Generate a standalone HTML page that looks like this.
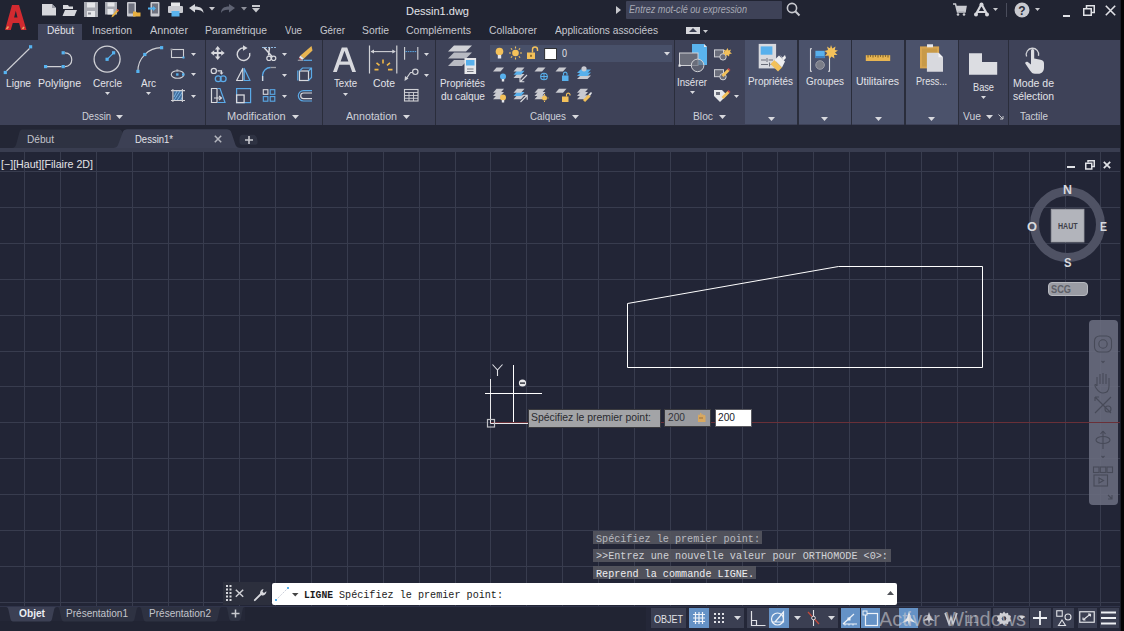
<!DOCTYPE html>
<html><head><meta charset="utf-8">
<style>
*{margin:0;padding:0;box-sizing:border-box}
html,body{width:1124px;height:631px;overflow:hidden;background:#1f2230;font-family:"Liberation Sans",sans-serif;color:#e6e6e6;position:relative}
.a{position:absolute;overflow:visible}
.t{position:absolute;white-space:nowrap}
</style></head><body>
<div class="a" style="left:0px;top:0px;width:1120px;height:40px;background:#212432;"></div>
<div class="a" style="left:0px;top:40px;width:1120px;height:85px;background:#3e4258;"></div>
<div class="a" style="left:0px;top:125px;width:1120px;height:27px;background:#232635;"></div>
<svg class="a" style="left:0px;top:152px;" width="1120" height="454" viewBox="0 0 1120 454"><rect width="1120" height="454" fill="#222536"/><rect x="24" y="0" width="1" height="454" fill="#383c4e"/><rect x="60" y="0" width="1" height="454" fill="#383c4e"/><rect x="96" y="0" width="1" height="454" fill="#383c4e"/><rect x="132" y="0" width="1" height="454" fill="#383c4e"/><rect x="168" y="0" width="1" height="454" fill="#383c4e"/><rect x="203" y="0" width="1" height="454" fill="#383c4e"/><rect x="239" y="0" width="1" height="454" fill="#383c4e"/><rect x="275" y="0" width="1" height="454" fill="#383c4e"/><rect x="311" y="0" width="1" height="454" fill="#383c4e"/><rect x="347" y="0" width="1" height="454" fill="#383c4e"/><rect x="383" y="0" width="1" height="454" fill="#383c4e"/><rect x="419" y="0" width="1" height="454" fill="#383c4e"/><rect x="455" y="0" width="1" height="454" fill="#383c4e"/><rect x="490" y="0" width="1" height="454" fill="#383c4e"/><rect x="526" y="0" width="1" height="454" fill="#383c4e"/><rect x="562" y="0" width="1" height="454" fill="#383c4e"/><rect x="598" y="0" width="1" height="454" fill="#383c4e"/><rect x="634" y="0" width="1" height="454" fill="#383c4e"/><rect x="670" y="0" width="1" height="454" fill="#383c4e"/><rect x="706" y="0" width="1" height="454" fill="#383c4e"/><rect x="742" y="0" width="1" height="454" fill="#383c4e"/><rect x="777" y="0" width="1" height="454" fill="#383c4e"/><rect x="813" y="0" width="1" height="454" fill="#383c4e"/><rect x="849" y="0" width="1" height="454" fill="#383c4e"/><rect x="885" y="0" width="1" height="454" fill="#383c4e"/><rect x="921" y="0" width="1" height="454" fill="#383c4e"/><rect x="957" y="0" width="1" height="454" fill="#383c4e"/><rect x="993" y="0" width="1" height="454" fill="#383c4e"/><rect x="1029" y="0" width="1" height="454" fill="#383c4e"/><rect x="1065" y="0" width="1" height="454" fill="#383c4e"/><rect x="1100" y="0" width="1" height="454" fill="#383c4e"/><rect x="0" y="19" width="1120" height="1" fill="#383c4e"/><rect x="0" y="55" width="1120" height="1" fill="#383c4e"/><rect x="0" y="91" width="1120" height="1" fill="#383c4e"/><rect x="0" y="127" width="1120" height="1" fill="#383c4e"/><rect x="0" y="163" width="1120" height="1" fill="#383c4e"/><rect x="0" y="199" width="1120" height="1" fill="#383c4e"/><rect x="0" y="234" width="1120" height="1" fill="#383c4e"/><rect x="0" y="270" width="1120" height="1" fill="#383c4e"/><rect x="0" y="306" width="1120" height="1" fill="#383c4e"/><rect x="0" y="342" width="1120" height="1" fill="#383c4e"/><rect x="0" y="378" width="1120" height="1" fill="#383c4e"/><rect x="0" y="414" width="1120" height="1" fill="#383c4e"/><rect x="0" y="450" width="1120" height="1" fill="#383c4e"/></svg>
<div class="a" style="left:0px;top:606px;width:1120px;height:25px;background:#212433;"></div>
<div class="a" style="left:1120px;top:0px;width:1px;height:631px;background:#1a1c26;"></div>
<div class="a" style="left:1121px;top:0px;width:3px;height:631px;background:#040405;"></div>
<svg class="a" style="left:3px;top:4px;" width="26" height="28" viewBox="0 0 26 28"><path d="M2 26 L9 1 H16 L23.5 26 H18 L16.1 19 H9.8 L7.8 26 Z M11.1 13.5 H14.5 L12.8 6.8 Z" fill="#d22a30" fill-rule="evenodd"/><path d="M3.5 25 L5.5 22.5 M19.5 25 L21 23" stroke="#f0c070" stroke-width="1.6" opacity="0.8"/></svg>
<svg class="a" style="left:42px;top:4px;" width="15" height="12" viewBox="0 0 15 12"><path d="M0 0H10L14 4V11.5H0Z" fill="#d6d7dc"/><path d="M10 0V4H14" fill="#9a9ca6"/></svg>
<svg class="a" style="left:62px;top:4px;" width="16" height="13" viewBox="0 0 16 13"><path d="M1 1H6L7 2.5H11V5H1Z" fill="#d6d7dc"/><path d="M3 6H15L12.5 12H0.5Z" fill="#d6d7dc"/></svg>
<svg class="a" style="left:84px;top:2px;" width="14" height="15" viewBox="0 0 14 15"><path d="M0 0H14V15H0Z" fill="#a9abb3"/><rect x="3" y="0.5" width="8" height="5" fill="#e6e7ea"/><rect x="3" y="9" width="8" height="6" fill="#e6e7ea"/><rect x="4" y="10.5" width="3" height="2" fill="#8a8c96"/></svg>
<svg class="a" style="left:105px;top:2px;" width="14" height="16" viewBox="0 0 14 16"><path d="M0 0H12V12.5H0Z" fill="#a9abb3"/><rect x="2.5" y="0.5" width="7" height="4" fill="#e6e7ea"/><rect x="2.5" y="7" width="6" height="5.5" fill="#e6e7ea"/><path d="M12.5 7 L14 8.5 L8.5 14.5 L6.5 15.5 L7 13.5 Z" fill="#e8b040"/><path d="M12.5 7 L14 8.5 L13 9.5 L11.5 8Z" fill="#d04040"/></svg>
<svg class="a" style="left:127px;top:2px;" width="14" height="15" viewBox="0 0 14 15"><rect x="0" y="0" width="9" height="14.5" rx="1" fill="#c9cad0"/><rect x="1.5" y="1.5" width="6" height="10" fill="#707380"/><path d="M6 9.5H9L10 10.5H13.5V14.5H6Z" fill="#e8b040"/></svg>
<svg class="a" style="left:148px;top:2px;" width="13" height="15" viewBox="0 0 13 15"><rect x="2.5" y="0" width="9" height="14.5" rx="1" fill="#c9cad0"/><rect x="4" y="1.5" width="6" height="10" fill="#707380"/><path d="M0 5.5H5V4L8 6.5 5 9V7.5H0Z" fill="#4fb0ee"/></svg>
<svg class="a" style="left:168px;top:2px;" width="15" height="15" viewBox="0 0 15 15"><rect x="3" y="0.5" width="9" height="4" fill="#e6e7ea"/><rect x="0" y="4" width="15" height="7" rx="1" fill="#c9cad0"/><rect x="3.5" y="9" width="8" height="5.5" fill="#5ab4ee"/></svg>
<svg class="a" style="left:189px;top:4px;" width="15" height="10" viewBox="0 0 15 10"><path d="M0 4 L6 0 V2.5 C11 2.5 14.5 4.5 14.5 9 C13 6.5 10 5.5 6 5.8 V8.5 Z" fill="#d6d7dc"/></svg>
<svg class="a" style="left:208.5px;top:7.25px;" width="6" height="3.5" viewBox="0 0 6 3.5"><path d="M0 0H6 L3.0 3.5 Z" fill="#c8c9ce"/></svg>
<svg class="a" style="left:221px;top:4px;" width="14" height="10" viewBox="0 0 14 10"><path d="M14 4 L8 0 V2.5 C3 2.5 0 4.5 0 9 C1.5 6.5 4 5.5 8 5.8 V8.5 Z" fill="#5e6272"/></svg>
<svg class="a" style="left:240.5px;top:7.25px;" width="6" height="3.5" viewBox="0 0 6 3.5"><path d="M0 0H6 L3.0 3.5 Z" fill="#8e909a"/></svg>
<div class="a" style="left:252px;top:5px;width:8px;height:1.5px;background:#c8c9ce;"></div>
<svg class="a" style="left:252.0px;top:7.75px;" width="8" height="4.5" viewBox="0 0 8 4.5"><path d="M0 0H8 L4.0 4.5 Z" fill="#c8c9ce"/></svg>
<div class="t" style="left:406.00px;top:6px;font-size:11px;line-height:11px;color:#e4e5ea;font-family:'Liberation Sans',sans-serif;">Dessin1.dwg</div>
<svg class="a" style="left:616px;top:6px;" width="5" height="8" viewBox="0 0 5 8"><path d="M0 0L5 4L0 8Z" fill="#c8c9ce"/></svg>
<div class="a" style="left:626px;top:1px;width:156px;height:18px;background:#3e4257;border-radius:1px"></div>
<div class="t" style="left:629.00px;top:5px;font-size:10px;line-height:10px;color:#a7a9b4;font-family:'Liberation Sans',sans-serif;font-style:italic;transform:scaleX(0.9112);transform-origin:0.00px 0;">Entrez mot-clé ou expression</div>
<svg class="a" style="left:786px;top:2px;" width="15" height="15" viewBox="0 0 15 15"><circle cx="6" cy="6" r="4.6" fill="none" stroke="#c9cad0" stroke-width="1.6"/><path d="M9.3 9.3 L13.5 13.5" stroke="#c9cad0" stroke-width="2"/></svg>
<svg class="a" style="left:953px;top:3px;" width="14" height="13" viewBox="0 0 14 13"><path d="M0 1H2.5L4.5 9H12L13 3.5H3.5" fill="none" stroke="#c9cad0" stroke-width="1.5"/><rect x="4" y="3.5" width="8.5" height="5" fill="#c9cad0"/><circle cx="5" cy="11.5" r="1.3" fill="#c9cad0"/><circle cx="11" cy="11.5" r="1.3" fill="#c9cad0"/></svg>
<svg class="a" style="left:974px;top:2px;" width="15" height="15" viewBox="0 0 15 15"><path d="M7.5 2 L1.5 13 M7.5 2 L13.5 13 M3.5 10 H11.5" stroke="#d6d7dc" stroke-width="2.2" fill="none"/><circle cx="7.5" cy="2.5" r="2" fill="#d6d7dc"/><circle cx="2" cy="12.5" r="2" fill="#d6d7dc"/><circle cx="13" cy="12.5" r="2" fill="#d6d7dc"/></svg>
<svg class="a" style="left:992.5px;top:8.0px;" width="5" height="3.0" viewBox="0 0 5 3.0"><path d="M0 0H5 L2.5 3.0 Z" fill="#c8c9ce"/></svg>
<div class="a" style="left:1006px;top:3px;width:1px;height:14px;background:#4a4d5c;"></div>
<svg class="a" style="left:1014px;top:2px;" width="16" height="16" viewBox="0 0 16 16"><circle cx="8" cy="8" r="7.5" fill="#c9cad0"/><text x="8" y="12.5" font-family="Liberation Sans" font-weight="bold" font-size="12" text-anchor="middle" fill="#2a2d3a">?</text></svg>
<svg class="a" style="left:1034.5px;top:8.0px;" width="5" height="3.0" viewBox="0 0 5 3.0"><path d="M0 0H5 L2.5 3.0 Z" fill="#c8c9ce"/></svg>
<div class="a" style="left:1063px;top:15px;width:7px;height:2px;background:#e0e1e6;"></div>
<svg class="a" style="left:1083px;top:5px;" width="12" height="11" viewBox="0 0 12 11"><path d="M3.5 3V0.75H11.25V7.5H8.5" fill="none" stroke="#e0e1e6" stroke-width="1.5"/><rect x="0.75" y="3.75" width="7.5" height="6.5" fill="none" stroke="#e0e1e6" stroke-width="1.5"/></svg>
<svg class="a" style="left:1105px;top:5px;" width="11" height="11" viewBox="0 0 11 11"><path d="M0.8 0.8L10.2 10.2M10.2 0.8L0.8 10.2" stroke="#e0e1e6" stroke-width="1.6"/></svg>
<div class="a" style="left:38px;top:24px;width:44px;height:16px;background:#3e4258;"></div>
<div class="t" style="left:47.00px;top:25px;font-size:11px;line-height:11px;color:#e2e3e8;font-family:'Liberation Sans',sans-serif;transform:scaleX(0.9184);transform-origin:0.00px 0;">Début</div>
<div class="t" style="left:92.00px;top:25px;font-size:11px;line-height:11px;color:#c5c7ce;font-family:'Liberation Sans',sans-serif;transform:scaleX(0.9479);transform-origin:0.00px 0;">Insertion</div>
<div class="t" style="left:150.00px;top:25px;font-size:11px;line-height:11px;color:#c5c7ce;font-family:'Liberation Sans',sans-serif;transform:scaleX(0.9870);transform-origin:0.00px 0;">Annoter</div>
<div class="t" style="left:205.00px;top:25px;font-size:11px;line-height:11px;color:#c5c7ce;font-family:'Liberation Sans',sans-serif;transform:scaleX(0.9394);transform-origin:0.00px 0;">Paramétrique</div>
<div class="t" style="left:285.00px;top:25px;font-size:11px;line-height:11px;color:#c5c7ce;font-family:'Liberation Sans',sans-serif;transform:scaleX(0.8854);transform-origin:0.00px 0;">Vue</div>
<div class="t" style="left:320.00px;top:25px;font-size:11px;line-height:11px;color:#c5c7ce;font-family:'Liberation Sans',sans-serif;transform:scaleX(0.8897);transform-origin:0.00px 0;">Gérer</div>
<div class="t" style="left:362.00px;top:25px;font-size:11px;line-height:11px;color:#c5c7ce;font-family:'Liberation Sans',sans-serif;transform:scaleX(0.9408);transform-origin:0.00px 0;">Sortie</div>
<div class="t" style="left:406.00px;top:25px;font-size:11px;line-height:11px;color:#c5c7ce;font-family:'Liberation Sans',sans-serif;transform:scaleX(0.9573);transform-origin:0.00px 0;">Compléments</div>
<div class="t" style="left:489.00px;top:25px;font-size:11px;line-height:11px;color:#c5c7ce;font-family:'Liberation Sans',sans-serif;transform:scaleX(0.9467);transform-origin:0.00px 0;">Collaborer</div>
<div class="t" style="left:555.00px;top:25px;font-size:11px;line-height:11px;color:#c5c7ce;font-family:'Liberation Sans',sans-serif;transform:scaleX(0.9254);transform-origin:0.00px 0;">Applications associées</div>
<div class="a" style="left:686px;top:27px;width:14px;height:7px;background:#d6d7dc;"></div>
<svg class="a" style="left:689px;top:28px;" width="8" height="4" viewBox="0 0 8 4"><path d="M0 4L4 0L8 4Z" fill="#3b3f52"/></svg>
<svg class="a" style="left:702.5px;top:29.5px;" width="5" height="3.0" viewBox="0 0 5 3.0"><path d="M0 0H5 L2.5 3.0 Z" fill="#c8c9ce"/></svg>
<div class="a" style="left:204.5px;top:40px;width:1.5px;height:85px;background:#2a2d3b;"></div>
<div class="a" style="left:321.5px;top:40px;width:1.5px;height:85px;background:#2a2d3b;"></div>
<div class="a" style="left:434.5px;top:40px;width:1.5px;height:85px;background:#2a2d3b;"></div>
<div class="a" style="left:673.5px;top:40px;width:1.5px;height:85px;background:#2a2d3b;"></div>
<div class="a" style="left:745px;top:40px;width:52px;height:84px;background:#4b526b;"></div>
<div class="a" style="left:799px;top:40px;width:52px;height:84px;background:#4b526b;"></div>
<div class="a" style="left:852px;top:40px;width:52px;height:84px;background:#4b526b;"></div>
<div class="a" style="left:906px;top:40px;width:52px;height:84px;background:#4b526b;"></div>
<div class="a" style="left:797px;top:40px;width:2px;height:85px;background:#2a2d3b;"></div>
<div class="a" style="left:851px;top:40px;width:1px;height:85px;background:#2a2d3b;"></div>
<div class="a" style="left:904px;top:40px;width:2px;height:85px;background:#2a2d3b;"></div>
<div class="a" style="left:958px;top:40px;width:1px;height:85px;background:#2a2d3b;"></div>
<div class="a" style="left:1008px;top:40px;width:1px;height:85px;background:#2a2d3b;"></div>
<div class="t" style="left:6.00px;top:78px;font-size:11px;line-height:11px;color:#e2e3e8;font-family:'Liberation Sans',sans-serif;transform:scaleX(0.9294);transform-origin:0.00px 0;">Ligne</div>
<div class="t" style="left:38.00px;top:78px;font-size:11px;line-height:11px;color:#e2e3e8;font-family:'Liberation Sans',sans-serif;transform:scaleX(0.9641);transform-origin:0.00px 0;">Polyligne</div>
<div class="t" style="left:93.00px;top:78px;font-size:11px;line-height:11px;color:#e2e3e8;font-family:'Liberation Sans',sans-serif;transform:scaleX(0.9119);transform-origin:0.00px 0;">Cercle</div>
<div class="t" style="left:141.00px;top:78px;font-size:11px;line-height:11px;color:#e2e3e8;font-family:'Liberation Sans',sans-serif;transform:scaleX(0.9091);transform-origin:0.00px 0;">Arc</div>
<svg class="a" style="left:105.0px;top:92.0px;" width="5" height="3.0" viewBox="0 0 5 3.0"><path d="M0 0H5 L2.5 3.0 Z" fill="#d8d9de"/></svg>
<svg class="a" style="left:146.0px;top:92.0px;" width="5" height="3.0" viewBox="0 0 5 3.0"><path d="M0 0H5 L2.5 3.0 Z" fill="#d8d9de"/></svg>
<div class="t" style="left:82.00px;top:111px;font-size:11px;line-height:11px;color:#cfd1d8;font-family:'Liberation Sans',sans-serif;transform:scaleX(0.8631);transform-origin:0.00px 0;">Dessin</div>
<svg class="a" style="left:116.2px;top:114.7px;" width="7" height="4.0" viewBox="0 0 7 4.0"><path d="M0 0H7 L3.5 4.0 Z" fill="#d8d9de"/></svg>
<div class="t" style="left:227.00px;top:111px;font-size:11px;line-height:11px;color:#cfd1d8;font-family:'Liberation Sans',sans-serif;">Modification</div>
<svg class="a" style="left:292.0px;top:114.7px;" width="7" height="4.0" viewBox="0 0 7 4.0"><path d="M0 0H7 L3.5 4.0 Z" fill="#d8d9de"/></svg>
<div class="t" style="left:334.00px;top:78px;font-size:11px;line-height:11px;color:#e2e3e8;font-family:'Liberation Sans',sans-serif;transform:scaleX(0.8745);transform-origin:0.00px 0;">Texte</div>
<svg class="a" style="left:342.5px;top:92.5px;" width="5" height="3.0" viewBox="0 0 5 3.0"><path d="M0 0H5 L2.5 3.0 Z" fill="#d8d9de"/></svg>
<div class="t" style="left:373.00px;top:78px;font-size:11px;line-height:11px;color:#e2e3e8;font-family:'Liberation Sans',sans-serif;transform:scaleX(0.9483);transform-origin:0.00px 0;">Cote</div>
<div class="t" style="left:346.00px;top:111px;font-size:11px;line-height:11px;color:#cfd1d8;font-family:'Liberation Sans',sans-serif;transform:scaleX(0.9696);transform-origin:0.00px 0;">Annotation</div>
<svg class="a" style="left:403.3px;top:114.7px;" width="7" height="4.0" viewBox="0 0 7 4.0"><path d="M0 0H7 L3.5 4.0 Z" fill="#d8d9de"/></svg>
<div class="t" style="left:440.00px;top:78px;font-size:11px;line-height:11px;color:#e2e3e8;font-family:'Liberation Sans',sans-serif;transform:scaleX(0.8982);transform-origin:0.00px 0;">Propriétés</div>
<div class="t" style="left:441.00px;top:91px;font-size:11px;line-height:11px;color:#e2e3e8;font-family:'Liberation Sans',sans-serif;transform:scaleX(0.9224);transform-origin:0.00px 0;">du calque</div>
<div class="t" style="left:530.00px;top:111px;font-size:11px;line-height:11px;color:#cfd1d8;font-family:'Liberation Sans',sans-serif;transform:scaleX(0.8911);transform-origin:0.00px 0;">Calques</div>
<svg class="a" style="left:571.8px;top:114.7px;" width="7" height="4.0" viewBox="0 0 7 4.0"><path d="M0 0H7 L3.5 4.0 Z" fill="#d8d9de"/></svg>
<div class="t" style="left:677.00px;top:77px;font-size:11px;line-height:11px;color:#e2e3e8;font-family:'Liberation Sans',sans-serif;transform:scaleX(0.8772);transform-origin:0.00px 0;">Insérer</div>
<svg class="a" style="left:689.5px;top:91.0px;" width="5" height="3.0" viewBox="0 0 5 3.0"><path d="M0 0H5 L2.5 3.0 Z" fill="#d8d9de"/></svg>
<div class="t" style="left:693.00px;top:111px;font-size:11px;line-height:11px;color:#cfd1d8;font-family:'Liberation Sans',sans-serif;transform:scaleX(0.9346);transform-origin:0.00px 0;">Bloc</div>
<svg class="a" style="left:718.5px;top:114.7px;" width="7" height="4.0" viewBox="0 0 7 4.0"><path d="M0 0H7 L3.5 4.0 Z" fill="#d8d9de"/></svg>
<div class="t" style="left:748.00px;top:76px;font-size:11px;line-height:11px;color:#e2e3e8;font-family:'Liberation Sans',sans-serif;transform:scaleX(0.8982);transform-origin:0.00px 0;">Propriétés</div>
<svg class="a" style="left:767.5px;top:116.5px;" width="7" height="4.0" viewBox="0 0 7 4.0"><path d="M0 0H7 L3.5 4.0 Z" fill="#d8d9de"/></svg>
<div class="t" style="left:806.00px;top:76px;font-size:11px;line-height:11px;color:#e2e3e8;font-family:'Liberation Sans',sans-serif;transform:scaleX(0.9005);transform-origin:0.00px 0;">Groupes</div>
<svg class="a" style="left:821.0px;top:116.5px;" width="7" height="4.0" viewBox="0 0 7 4.0"><path d="M0 0H7 L3.5 4.0 Z" fill="#d8d9de"/></svg>
<div class="t" style="left:856.00px;top:76px;font-size:11px;line-height:11px;color:#e2e3e8;font-family:'Liberation Sans',sans-serif;transform:scaleX(0.9513);transform-origin:0.00px 0;">Utilitaires</div>
<svg class="a" style="left:874.5px;top:116.5px;" width="7" height="4.0" viewBox="0 0 7 4.0"><path d="M0 0H7 L3.5 4.0 Z" fill="#d8d9de"/></svg>
<div class="t" style="left:916.00px;top:76px;font-size:11px;line-height:11px;color:#e2e3e8;font-family:'Liberation Sans',sans-serif;transform:scaleX(0.8311);transform-origin:0.00px 0;">Press...</div>
<svg class="a" style="left:927.9px;top:116.5px;" width="7" height="4.0" viewBox="0 0 7 4.0"><path d="M0 0H7 L3.5 4.0 Z" fill="#d8d9de"/></svg>
<div class="t" style="left:973.00px;top:82px;font-size:11px;line-height:11px;color:#e2e3e8;font-family:'Liberation Sans',sans-serif;transform:scaleX(0.8367);transform-origin:0.00px 0;">Base</div>
<svg class="a" style="left:981.2px;top:96.0px;" width="5" height="3.0" viewBox="0 0 5 3.0"><path d="M0 0H5 L2.5 3.0 Z" fill="#d8d9de"/></svg>
<div class="t" style="left:963.00px;top:111px;font-size:11px;line-height:11px;color:#cfd1d8;font-family:'Liberation Sans',sans-serif;transform:scaleX(0.9375);transform-origin:0.00px 0;">Vue</div>
<svg class="a" style="left:986.0px;top:114.7px;" width="7" height="4.0" viewBox="0 0 7 4.0"><path d="M0 0H7 L3.5 4.0 Z" fill="#d8d9de"/></svg>
<svg class="a" style="left:998px;top:114px;" width="6" height="6" viewBox="0 0 6 6"><path d="M0.5 0.5L5 5M5 2V5H2" stroke="#c8c9ce" stroke-width="1" fill="none"/></svg>
<div class="t" style="left:1013.00px;top:78px;font-size:11px;line-height:11px;color:#e2e3e8;font-family:'Liberation Sans',sans-serif;transform:scaleX(0.9579);transform-origin:0.00px 0;">Mode de</div>
<div class="t" style="left:1013.00px;top:91px;font-size:11px;line-height:11px;color:#e2e3e8;font-family:'Liberation Sans',sans-serif;transform:scaleX(0.9447);transform-origin:0.00px 0;">sélection</div>
<div class="t" style="left:1020.00px;top:111px;font-size:11px;line-height:11px;color:#cfd1d8;font-family:'Liberation Sans',sans-serif;transform:scaleX(0.8974);transform-origin:0.00px 0;">Tactile</div>
<svg class="a" style="left:0px;top:0px;" width="210" height="125" viewBox="0 0 210 125"><path d="M6.5 71 L29.5 48.5" stroke="#cfd0d5" stroke-width="1.1"/><rect x="29.00" y="45.20" width="3.20" height="3.20" fill="#56b3f0"/><rect x="3.70" y="70.90" width="3.20" height="3.20" fill="#56b3f0"/><path d="M47 66.6 H61.5 M65 52.8 C74 52.8 74 66.6 65 66.6" stroke="#cfd0d5" stroke-width="1.2" fill="none"/><rect x="44.00" y="65.00" width="3.20" height="3.20" fill="#56b3f0"/><rect x="61.60" y="65.00" width="3.20" height="3.20" fill="#56b3f0"/><rect x="61.60" y="51.20" width="3.20" height="3.20" fill="#56b3f0"/><circle cx="107.1" cy="59.1" r="13" stroke="#cfd0d5" stroke-width="1.3" fill="none"/><path d="M107.1 59.3 L113.6 52.8" stroke="#56b3f0" stroke-width="1.2"/><rect x="105.50" y="57.70" width="3.20" height="3.20" fill="#56b3f0"/><rect x="112.00" y="51.20" width="3.20" height="3.20" fill="#56b3f0"/><path d="M137.9 71.4 A23.4 23.4 0 0 1 161.6 47.7" stroke="#cfd0d5" stroke-width="1.2" fill="none"/><rect x="136.30" y="69.80" width="3.20" height="3.20" fill="#56b3f0"/><rect x="143.20" y="52.90" width="3.20" height="3.20" fill="#56b3f0"/><rect x="160.00" y="46.10" width="3.20" height="3.20" fill="#56b3f0"/><rect x="171.5" y="49.5" width="12" height="8" stroke="#cfd0d5" stroke-width="1.1" fill="none"/><rect x="170.50" y="48.50" width="2.00" height="2.00" fill="#8a8c96"/><rect x="182.50" y="56.50" width="2.00" height="2.00" fill="#56b3f0"/><ellipse cx="177.6" cy="74.5" rx="6.3" ry="3.8" stroke="#cfd0d5" stroke-width="1.1" fill="none"/><rect x="176.10" y="73.30" width="2.40" height="2.40" fill="#56b3f0"/><rect x="182.00" y="73.30" width="2.40" height="2.40" fill="#56b3f0"/><rect x="176.30" y="69.50" width="2.00" height="2.00" fill="#b8bac2"/><rect x="173.5" y="91" width="9" height="9.5" fill="#3f6c9c"/><path d="M174 97 L177 91 M174 100.5 L180 91 M177 100.5 L182.5 92 M180.5 100.5 L182.5 97" stroke="#8cc4f0" stroke-width="0.8"/><path d="M172.9 89 V102 M182.4 89 V102 M171 90.6 H185 M171 100.5 H185" stroke="#cfd0d5" stroke-width="1.1"/></svg>
<svg class="a" style="left:191.3px;top:52.5px;" width="5" height="3.0" viewBox="0 0 5 3.0"><path d="M0 0H5 L2.5 3.0 Z" fill="#d8d9de"/></svg>
<svg class="a" style="left:191.3px;top:73.3px;" width="5" height="3.0" viewBox="0 0 5 3.0"><path d="M0 0H5 L2.5 3.0 Z" fill="#d8d9de"/></svg>
<svg class="a" style="left:191.3px;top:94.7px;" width="5" height="3.0" viewBox="0 0 5 3.0"><path d="M0 0H5 L2.5 3.0 Z" fill="#d8d9de"/></svg>
<svg class="a" style="left:0px;top:0px;" width="330" height="125" viewBox="0 0 330 125"><path d="M217.7 46 L220.5 49.5 H218.6 V52.1 H221.2 V50.2 L224.7 53 L221.2 55.8 V53.9 H218.6 V56.5 H220.5 L217.7 60 L214.9 56.5 H216.8 V53.9 H214.2 V55.8 L210.7 53 L214.2 50.2 V52.1 H216.8 V49.5 H214.9 Z" fill="#d8d9de"/><path d="M243.5 47.9 A6.3 6.3 0 1 0 249.7 53" stroke="#d8d9de" stroke-width="1.4" fill="none"/><path d="M243 45.3 L247.6 48 L243 50.7 Z" fill="#d8d9de"/><path d="M262 47.5 H276" stroke="#8fb8e0" stroke-width="1" stroke-dasharray="2 1"/><path d="M264 47.5 L272.5 57 M269.5 47.5 L268.5 55.5" stroke="#d8d9de" stroke-width="1.5"/><circle cx="269" cy="58.3" r="2.2" stroke="#d8d9de" stroke-width="1.2" fill="none"/><circle cx="273.6" cy="58.3" r="2.2" stroke="#d8d9de" stroke-width="1.2" fill="none"/><path d="M311.5 46 L312.5 50.5 L304 58.5 L300.5 55.5 Z" fill="#e8b552"/><path d="M300.5 55.5 L304 58.5 L302 60 L299 57.5Z" fill="#e6e7ea"/><path d="M299 57.5 L302 60 L300 60.5Z" fill="#d04848"/><path d="M297.8 60.3 H303" stroke="#9ea0a8" stroke-width="1.2"/><path d="M303.5 60.3 H312" stroke="#5aaae8" stroke-width="1.2"/><circle cx="213.8" cy="70.9" r="2.6" stroke="#d8d9de" stroke-width="1.2" fill="none"/><path d="M217.5 70.9 H221.5 V73" stroke="#d8d9de" stroke-width="1.2" fill="none"/><path d="M219.5 72.5 H223.5 L221.5 74.8Z" fill="#d8d9de"/><circle cx="218.2" cy="78.8" r="2.9" stroke="#5aaae8" stroke-width="1.3" fill="none"/><circle cx="223.2" cy="78.8" r="2.9" stroke="#5aaae8" stroke-width="1.3" fill="none"/><path d="M242.8 68.5 V80.5 H236.6 Z" stroke="#d8d9de" stroke-width="1.2" fill="none" stroke-linejoin="round"/><path d="M244.2 68.5 V80.5 H250 Z" stroke="#5aaae8" stroke-width="1.2" fill="none" stroke-linejoin="round"/><path d="M262.6 81 V75 A8 8 0 0 1 270.5 67.5" stroke="#5aaae8" stroke-width="1.3" fill="none"/><path d="M270.5 67.5 H276" stroke="#9ea0a8" stroke-width="1.3"/><path d="M262.6 81 V76" stroke="#d8d9de" stroke-width="1.3"/><rect x="299.5" y="71" width="9" height="9.5" stroke="#d8d9de" stroke-width="1.2" fill="none"/><path d="M299.5 71 L302.5 68 H311.5 V77.5 L308.5 80.5 M308.5 71 L311.5 68" stroke="#5aaae8" stroke-width="1.2" fill="none"/><path d="M297.8 70.5 V80.5" stroke="#5aaae8" stroke-width="1.2"/><path d="M211.5 88.5 H217 V102.5 H211.5 Z" stroke="#d8d9de" stroke-width="1.2" fill="none"/><path d="M217.5 88.5 H220 L225 102.5 H217.5" stroke="#5aaae8" stroke-width="1.2" fill="none"/><path d="M214 98 H221 M219 96 L221.5 98 L219 100" stroke="#d8d9de" stroke-width="1.2" fill="none"/><rect x="236.6" y="88.6" width="14" height="14" stroke="#5aaae8" stroke-width="1.2" fill="none"/><rect x="236.6" y="95" width="7.5" height="7.6" stroke="#d8d9de" stroke-width="1.3" fill="none"/><rect x="263.3" y="89.7" width="4.6" height="4.6" stroke="#d8d9de" stroke-width="1.1" fill="none"/><rect x="270.2" y="89.7" width="4.6" height="4.6" stroke="#5aaae8" stroke-width="1.1" fill="none"/><rect x="263.3" y="96.6" width="4.6" height="4.6" stroke="#5aaae8" stroke-width="1.1" fill="none"/><rect x="270.2" y="96.6" width="4.6" height="4.6" stroke="#5aaae8" stroke-width="1.1" fill="none"/><path d="M312 90.6 H303.5 A5.2 5.2 0 0 0 303.5 101 H312" stroke="#5aaae8" stroke-width="1.2" fill="none"/><path d="M312 93 H303.5 A2.8 2.8 0 0 0 303.5 98.6 H312" stroke="#d8d9de" stroke-width="1.2" fill="none"/></svg>
<svg class="a" style="left:282.3px;top:52.5px;" width="5" height="3.0" viewBox="0 0 5 3.0"><path d="M0 0H5 L2.5 3.0 Z" fill="#d8d9de"/></svg>
<svg class="a" style="left:282.3px;top:73.5px;" width="5" height="3.0" viewBox="0 0 5 3.0"><path d="M0 0H5 L2.5 3.0 Z" fill="#d8d9de"/></svg>
<svg class="a" style="left:282.3px;top:94.8px;" width="5" height="3.0" viewBox="0 0 5 3.0"><path d="M0 0H5 L2.5 3.0 Z" fill="#d8d9de"/></svg>
<svg class="a" style="left:0px;top:0px;" width="360" height="80" viewBox="0 0 360 80"><path d="M333 72 L341.8 47.6 H347.2 L356 72 H352.2 L349.6 64.8 H339.4 L336.8 72 Z M340.6 61.5 H348.4 L344.5 50.8 Z" fill="#d8d9de" fill-rule="evenodd"/></svg>
<svg class="a" style="left:0px;top:0px;" width="440" height="125" viewBox="0 0 440 125"><path d="M369.5 45.5 V73.5 M396.8 45.5 V73.5" stroke="#d0d1d6" stroke-width="1.2"/><path d="M371 51.6 H395" stroke="#d0d1d6" stroke-width="1.1"/><path d="M370.5 51.6 L374 49.6 V53.6Z M395.8 51.6 L392.3 49.6 V53.6Z" fill="#d0d1d6"/><path d="M374.5 69.6 H378.5 M388 69.6 H392.5 M376.5 62.8 L379.5 65.3 M390 62.8 L387 65.3 M383 59.5 V63.5" stroke="#f0b848" stroke-width="1.6"/><path d="M404.6 47 V59.7 M417.8 47 V59.7" stroke="#d0d1d6" stroke-width="1.1"/><path d="M405.5 51.6 H417" stroke="#5aaae8" stroke-width="1" stroke-dasharray="1.5 0.8"/><circle cx="415.3" cy="71.8" r="2.7" stroke="#d0d1d6" stroke-width="1.2" fill="none"/><path d="M412.8 72.5 H410.5 L406 79" stroke="#d0d1d6" stroke-width="1.2" fill="none"/><path d="M404.5 81 L405 76 L408.5 78.5Z" fill="#d0d1d6"/><rect x="404.5" y="89.5" width="13.5" height="11.5" stroke="#d0d1d6" stroke-width="1.1" fill="none"/><path d="M404.5 92.5 H418 M404.5 95.5 H418 M404.5 98.3 H418 M409 92.5 V101 M413.5 92.5 V101" stroke="#d0d1d6" stroke-width="0.9"/></svg>
<svg class="a" style="left:424.1px;top:52.5px;" width="5" height="3.0" viewBox="0 0 5 3.0"><path d="M0 0H5 L2.5 3.0 Z" fill="#d8d9de"/></svg>
<svg class="a" style="left:424.1px;top:73.5px;" width="5" height="3.0" viewBox="0 0 5 3.0"><path d="M0 0H5 L2.5 3.0 Z" fill="#d8d9de"/></svg>
<svg class="a" style="left:0px;top:0px;" width="480" height="125" viewBox="0 0 480 125"><path d="M454.00 45.60 H472.00 L466.00 51.60 H448.00 Z" fill="#d0d1d6"/><path d="M454.00 52.60 H472.00 L466.00 58.60 H448.00 Z" fill="#b8bac2"/><path d="M454.00 60.00 H468.00 L462.00 66.00 H448.00 Z" fill="#b8bac2"/><rect x="464.5" y="58" width="11.6" height="16" fill="#e6e7ea"/><rect x="466" y="60" width="8.5" height="5.5" fill="#58b0ec"/><path d="M467 69 H473.5 M467 71.5 H473.5" stroke="#6a6d78" stroke-width="0.9"/></svg>
<div class="a" style="left:490px;top:45px;width:182px;height:17px;background:#485069;"></div>
<svg class="a" style="left:0px;top:0px;" width="680" height="125" viewBox="0 0 680 125"><circle cx="499.5" cy="51.5" r="3.8" fill="#f3c15a"/><rect x="497.8" y="55" width="3.4" height="3.5" fill="#e6e7ea"/><circle cx="515.5" cy="53" r="3.3" fill="#f3c15a"/><path d="M515.5 46.5 V48.5 M515.5 57.5 V59.5 M509 53 H511 M520 53 H522 M510.9 48.4 L512.2 49.7 M518.8 56.3 L520.1 57.6 M520.1 48.4 L518.8 49.7 M512.2 56.3 L510.9 57.6" stroke="#f3c15a" stroke-width="1.1"/><rect x="527" y="52.5" width="8" height="6.5" fill="#f3c15a"/><path d="M532.5 52.5 V49.5 A2.5 2.5 0 0 1 537.5 49.5 V51" stroke="#f3c15a" stroke-width="1.4" fill="none"/><rect x="530.2" y="54.8" width="1.6" height="2" fill="#7a5a20"/><rect x="544.7" y="48.6" width="11.7" height="10.9" fill="#ffffff" stroke="#1a1a1a" stroke-width="0.8"/></svg>
<div class="t" style="left:561.50px;top:48px;font-size:11px;line-height:11px;color:#e2e3e8;font-family:'Liberation Sans',sans-serif;transform:scaleX(0.8197);transform-origin:0.00px 0;">0</div>
<svg class="a" style="left:663.5px;top:52.25px;" width="6" height="3.5" viewBox="0 0 6 3.5"><path d="M0 0H6 L3.0 3.5 Z" fill="#d8d9de"/></svg>
<svg class="a" style="left:0px;top:0px;" width="600" height="125" viewBox="0 0 600 125"><path d="M496.5 67.5 H504.0 L500.5 71.5 H493.0 Z" fill="#c9cad0"/><circle cx="503" cy="76.5" r="3" fill="#58b0ec"/><rect x="501.8" y="79" width="2.4" height="2.5" fill="#e6e7ea"/><path d="M517.0 74.0 H524.5 L521.0 78.0 H513.5 Z" fill="#c9cad0"/><path d="M517.0 70.8 H524.5 L521.0 74.8 H513.5 Z" fill="#58b0ec"/><path d="M517.0 67.5 H524.5 L521.0 71.5 H513.5 Z" fill="#c9cad0"/><path d="M527 75 L520.5 81.5 M520 77.5 V81.8 H524.3" stroke="#d8d9de" stroke-width="1.1" fill="none"/><path d="M538.0 67.5 H545.5 L542.0 71.5 H534.5 Z" fill="#c9cad0"/><circle cx="544" cy="76.5" r="3.3" stroke="#58b0ec" stroke-width="1.1" fill="none"/><path d="M540.5 76.5 H547.5 M544 73 V80" stroke="#58b0ec" stroke-width="1"/><path d="M559.0 67.5 H566.5 L563.0 71.5 H555.5 Z" fill="#c9cad0"/><rect x="562" y="75.5" width="6.5" height="5.5" fill="#58b0ec"/><path d="M563.5 75.5 V73.5 A1.8 1.8 0 0 1 567 73.5 V75.5" stroke="#58b0ec" stroke-width="1.1" fill="none"/><path d="M580.5 75.5 H591 L587.5 79 H577Z" fill="#c9cad0"/><path d="M580.5 72.5 H591 L587.5 76 H577Z" fill="#58b0ec"/><path d="M580.5 69.5 H591 L587.5 73 H577Z" fill="#58b0ec"/><circle cx="584" cy="68.8" r="2.6" fill="#c9cad0"/><path d="M496.5 95.2 H504.0 L500.5 99.2 H493.0 Z" fill="#c9cad0"/><path d="M496.5 92.0 H504.0 L500.5 96.0 H493.0 Z" fill="#c9cad0"/><path d="M496.5 88.7 H504.0 L500.5 92.7 H493.0 Z" fill="#c9cad0"/><circle cx="503" cy="97.5" r="3" fill="#f3c15a"/><rect x="501.8" y="100" width="2.4" height="2.5" fill="#e6e7ea"/><path d="M517.0 95.2 H524.5 L521.0 99.2 H513.5 Z" fill="#c9cad0"/><path d="M517.0 92.0 H524.5 L521.0 96.0 H513.5 Z" fill="#58b0ec"/><path d="M517.0 88.7 H524.5 L521.0 92.7 H513.5 Z" fill="#c9cad0"/><path d="M520.5 102 L527 95.5 M522.7 95.3 H527.2 V99.8" stroke="#d8d9de" stroke-width="1.1" fill="none"/><path d="M538.0 95.2 H545.5 L542.0 99.2 H534.5 Z" fill="#c9cad0"/><path d="M538.0 92.0 H545.5 L542.0 96.0 H534.5 Z" fill="#c9cad0"/><path d="M538.0 88.7 H545.5 L542.0 92.7 H534.5 Z" fill="#c9cad0"/><circle cx="544.5" cy="98" r="2.5" fill="#f3c15a"/><path d="M544.5 94 V95 M544.5 101 V102 M540.5 98 H541.5 M547.5 98 H548.5" stroke="#f3c15a" stroke-width="1"/><path d="M559.0 88.7 H566.5 L563.0 92.7 H555.5 Z" fill="#c9cad0"/><rect x="562" y="96.5" width="6.5" height="5.5" fill="#f3c15a"/><path d="M566.5 96.5 V94.5 A1.8 1.8 0 0 1 570 94.5 V95.5" stroke="#f3c15a" stroke-width="1.1" fill="none"/><path d="M580.5 95.2 H588.0 L584.5 99.2 H577.0 Z" fill="#c9cad0"/><path d="M580.5 92.0 H588.0 L584.5 96.0 H577.0 Z" fill="#c9cad0"/><path d="M580.5 88.7 H588.0 L584.5 92.7 H577.0 Z" fill="#c9cad0"/><path d="M584 101 L589.5 95.5" stroke="#f3c15a" stroke-width="3"/><path d="M588.5 94.5 L591 92 L592 93 L590 96Z" fill="#e6e7ea"/></svg>
<svg class="a" style="left:0px;top:0px;" width="745" height="125" viewBox="0 0 745 125"><path d="M692 44 H704 L707 47 V65 H692Z" fill="#5ab4ee"/><path d="M704 44 V47 H707Z" fill="#e6e7ea"/><rect x="679.5" y="53" width="18.5" height="12.5" fill="#6a6d7a" stroke="#d0d1d6" stroke-width="1"/><circle cx="697.6" cy="65.4" r="6.3" fill="#6a6d7a" fill-opacity="0.7" stroke="#d0d1d6" stroke-width="1"/><rect x="678.5" y="64.5" width="2.2" height="2.2" fill="#e6e7ea"/><rect x="714.5" y="49.9" width="9" height="7" fill="#6a6d7a" stroke="#d0d1d6" stroke-width="1"/><circle cx="723" cy="56.9" r="3.2" fill="#6a6d7a" stroke="#d0d1d6" stroke-width="1"/><path d="M727.5 48 L728.6 50.5 L731 49.5 L730 52 L732 53.5 L729.5 54 L729 56.5 L727 55 L725 56.5 L725 54 L722.5 53.5 L724.5 52 L723.5 49.5 L726 50.5Z" fill="#f3c15a"/><rect x="714.5" y="69.7" width="9" height="7" fill="#6a6d7a" stroke="#d0d1d6" stroke-width="1"/><circle cx="723" cy="76.7" r="3.2" fill="#6a6d7a" stroke="#d0d1d6" stroke-width="1"/><path d="M721.5 75 L727.5 69 L729.5 71 L723.5 77Z" fill="#f3c15a"/><path d="M727.5 69 L728.5 68 L730.5 70 L729.5 71Z" fill="#d04848"/><path d="M714 90 H722 L727 95 L720 102 L714 96Z" fill="#e6e7ea"/><path d="M716 92 H720 V95 H716Z" fill="#6a6d7a"/><path d="M721.5 97 L727.5 91 L729.5 93 L723.5 99Z" fill="#f3c15a"/><path d="M727.5 91 L728.5 90 L730.5 92 L729.5 93Z" fill="#d04848"/></svg>
<svg class="a" style="left:734.3px;top:94.5px;" width="5" height="3.0" viewBox="0 0 5 3.0"><path d="M0 0H5 L2.5 3.0 Z" fill="#d8d9de"/></svg>
<svg class="a" style="left:0px;top:0px;" width="1120" height="125" viewBox="0 0 1120 125"><rect x="758.7" y="43.9" width="17.4" height="24.5" fill="#d8d9de"/><rect x="760.7" y="46.4" width="11.7" height="8.3" fill="#58b0ec"/><path d="M761 60 H766 M768.5 60 H773 M761 64.5 H768 M770.5 64.5 H773 M767 58 V62 M769.5 62.5 V66.5" stroke="#6a6d78" stroke-width="1"/><path d="M770.5 64 L774.5 60 L782 67.5 L778 71.5Z" fill="#f3c15a" transform="rotate(0)"/><path d="M774.5 60 L779 55.5 L785 61.5 L782 67.5Z" fill="#eeeef0"/><path d="M780 55 L782.5 57.5 L785 55 L786 58 L783.5 60.5Z" fill="#eeeef0"/><path d="M812 48.8 H810.5 V71.3 H812 M828 48.8 H829.5 V71.3 H828" stroke="#d8d9de" stroke-width="1.1" fill="none"/><rect x="815.4" y="50.8" width="9.3" height="7.3" fill="#58b0ec"/><rect x="815.4" y="56" width="9.3" height="2" fill="#3d80c0"/><circle cx="820.1" cy="65" r="4.3" fill="#7a7d88" stroke="#9a9ca6" stroke-width="1"/><path d="M831 45 L832.3 48.5 L835.5 46.5 L834.8 50 L838 50.5 L835 52.5 L837.5 55 L834 55 L834.5 58.5 L831.5 56.5 L829.5 59 L828.5 55.5 L825 56 L827.3 53 L824.5 51 L828 50 L827 46.5 L830 48.5Z" fill="#f3c15a"/><rect x="865.8" y="55.2" width="24.4" height="5.8" fill="#e8b552"/><path d="M868 55.2 V57.5 M870.5 55.2 V56.8 M873 55.2 V57.5 M875.5 55.2 V56.8 M878 55.2 V57.5 M880.5 55.2 V56.8 M883 55.2 V57.5 M885.5 55.2 V56.8 M888 55.2 V57.5" stroke="#6a5020" stroke-width="0.9"/><rect x="920" y="46.4" width="19.1" height="22" fill="#d8a550"/><rect x="922" y="48.5" width="15" height="18" fill="#c89a48"/><rect x="927" y="44.3" width="6" height="3" fill="#e6e7ea"/><path d="M926.9 52.7 H938.5 L943 57.2 V71.8 H926.9Z" fill="#d8d9de"/><path d="M938.5 52.7 V57.2 H943Z" fill="#f4f4f6"/><path d="M969 53.2 H982 V62 H997.2 V74.8 H969Z" fill="#dcdde2"/><path d="M1026.6 56.5 A6.2 6.2 0 1 1 1038.5 55.8" stroke="#d0d1d6" stroke-width="1.3" fill="none"/><path d="M1031 50.5 A1.6 1.6 0 0 1 1034.2 50.5 V58.5 L1040.5 59.7 C1042.8 60.2 1044 61 1044 63.5 V67.5 C1044 71 1042 73.8 1038 73.8 H1035 C1032.5 73.8 1031.5 72.5 1030 70.5 L1025.3 63.5 C1024.8 62.2 1026.5 61 1027.8 62 L1031 64.5Z" fill="#dcdde2"/></svg>
<div class="a" style="left:0px;top:148px;width:1120px;height:4px;background:#393d50;"></div>
<svg class="a" style="left:0px;top:125px;" width="300" height="27" viewBox="0 0 300 27"><path d="M12 23 C14 23 15 22 16 20 L19.5 7 C20.5 4.5 21.5 4.5 23.5 4.5 H118 C120.5 4.5 121.5 5 122.5 7.5 L127 21 C127.5 22.5 128.5 23 130 23 Z" fill="#2e3242"/><path d="M112 23 C116 23 117 22 118 20 L122.5 8 C123.5 5 125 4.3 128 4.3 H226 C229 4.3 230.5 5 231.5 8 L235.5 20 C236.5 22 237.5 23 241 23 Z" fill="#3c4054"/><path d="M239.5 14 C239.5 11 240.5 9.7 243 9.7 H252 C255 9.7 256 10.5 257 13 L257.5 16 C258 18.5 257 19.7 254.5 19.7 H242 C240 19.7 239.5 18.5 239.5 16.5 Z" fill="#2e3242"/></svg>
<div class="t" style="left:27.00px;top:134px;font-size:11px;line-height:11px;color:#c3c5cc;font-family:'Liberation Sans',sans-serif;transform:scaleX(0.9184);transform-origin:0.00px 0;">Début</div>
<div class="t" style="left:135.00px;top:134px;font-size:11px;line-height:11px;color:#e2e3e8;font-family:'Liberation Sans',sans-serif;transform:scaleX(0.8636);transform-origin:0.00px 0;">Dessin1*</div>
<svg class="a" style="left:214px;top:135px;" width="8" height="8" viewBox="0 0 8 8"><path d="M0.8 0.8L7.2 7.2M7.2 0.8L0.8 7.2" stroke="#b4b6be" stroke-width="1.5"/></svg>
<svg class="a" style="left:245px;top:135.5px;" width="8" height="8" viewBox="0 0 8 8"><path d="M4 0V8M0 4H8" stroke="#c8c9ce" stroke-width="1.6"/></svg>
<div class="t" style="left:1.00px;top:159px;font-size:11px;line-height:11px;color:#e2e3e8;font-family:'Liberation Sans',sans-serif;transform:scaleX(0.9674);transform-origin:0.00px 0;">[−][Haut][Filaire 2D]</div>
<div class="a" style="left:1067px;top:166px;width:8px;height:2px;background:#e0e1e6;"></div>
<svg class="a" style="left:1085px;top:160px;" width="10" height="10" viewBox="0 0 10 10"><path d="M3 2.5V0.75H9.25V6.5H7" fill="none" stroke="#e0e1e6" stroke-width="1.5"/><rect x="0.75" y="3.25" width="6" height="5.75" fill="none" stroke="#e0e1e6" stroke-width="1.5"/></svg>
<svg class="a" style="left:1102.5px;top:161px;" width="8" height="8" viewBox="0 0 8 8"><path d="M0.8 0.8L7.2 7.2M7.2 0.8L0.8 7.2" stroke="#e0e1e6" stroke-width="1.7"/></svg>
<svg class="a" style="left:1025px;top:183px;" width="85" height="85" viewBox="0 0 85 85"><circle cx="42.5" cy="41.5" r="33" fill="none" stroke="#4f5264" stroke-width="9"/><rect x="26.2" y="26.2" width="32.8" height="32.8" fill="#b2b4bb" stroke="#9a9ca4" stroke-width="0.8"/></svg>
<div class="t" style="left:1057.50px;top:222px;font-size:9px;line-height:9px;color:#3e4048;font-family:'Liberation Sans',sans-serif;font-weight:bold;transform:scaleX(0.7800);transform-origin:0.00px 0;">HAUT</div>
<div class="t" style="left:1063.00px;top:184px;font-size:12px;line-height:12px;color:#d8d9de;font-family:'Liberation Sans',sans-serif;font-weight:bold;transform:scaleX(1.0345);transform-origin:0.00px 0;">N</div>
<div class="t" style="left:1063.50px;top:257px;font-size:12px;line-height:12px;color:#d8d9de;font-family:'Liberation Sans',sans-serif;font-weight:bold;transform:scaleX(0.9375);transform-origin:0.00px 0;">S</div>
<div class="t" style="left:1027.00px;top:221px;font-size:12px;line-height:12px;color:#d8d9de;font-family:'Liberation Sans',sans-serif;font-weight:bold;transform:scaleX(1.0753);transform-origin:0.00px 0;">O</div>
<div class="t" style="left:1100.00px;top:221px;font-size:12px;line-height:12px;color:#d8d9de;font-family:'Liberation Sans',sans-serif;font-weight:bold;transform:scaleX(0.8750);transform-origin:0.00px 0;">E</div>
<div class="a" style="left:1047.5px;top:281.5px;width:40px;height:14.5px;background:#9a9ca4;border-radius:4px;border:1px solid #b8bac0"></div>
<div class="t" style="left:1051.00px;top:285px;font-size:10px;line-height:10px;color:#5e6068;font-family:'Liberation Sans',sans-serif;font-weight:bold;transform:scaleX(0.9217);transform-origin:0.00px 0;">SCG</div>
<div class="a" style="left:1089px;top:319.5px;width:28.5px;height:185px;background:#6a6d7f;border-radius:4px;opacity:0.88"></div>
<svg class="a" style="left:1089px;top:319px;" width="29" height="186" viewBox="0 0 29 186"><g stroke="#474a58" fill="none" stroke-width="1.1"><rect x="5.5" y="17" width="17" height="16" rx="5"/><circle cx="14" cy="25" r="4.2"/><path d="M12.5 42 L14 43.5 L15.5 42"/><path d="M8 67 V58 M11 65 V55 M14 65 V54 M17 65 V55 M20 67 V59 M8 67 C6 64 5 66 7 69 C9 72 11 74 14 74 C18 74 20 71 20 67"/><path d="M6 78 L22 94 M22 78 L6 94 M6 78 V82 M6 78 H10"/><circle cx="19" cy="90" r="3"/><path d="M14 112 V130 M14 112 L11.5 115 M14 112 L16.5 115"/><ellipse cx="14" cy="121" rx="7" ry="3.5"/><path d="M12.5 137 L14 138.5 L15.5 137"/><rect x="4.5" y="148" width="5.5" height="5.5"/><rect x="11.3" y="148" width="5.5" height="5.5"/><rect x="18" y="148" width="5.5" height="5.5"/><rect x="5" y="156" width="13.5" height="11"/><path d="M10 159 L14.5 161.5 L10 164Z"/><path d="M19 176 L23 180 M23 176 V180 H19"/></g></svg>
<div class="a" style="left:1089px;top:422px;width:28.5px;height:1px;background:#a04040;opacity:0.6"></div>
<div class="a" style="left:490px;top:422px;width:630px;height:1px;background:#6a3038;"></div>
<svg class="a" style="left:0px;top:152px;" width="1120" height="454" viewBox="0 0 1120 454"><path d="M627.5 151.5 L838.5 114.5 H982.5 V215.5 H627.5 Z" fill="none" stroke="#ffffff" stroke-width="1"/><path d="M490.5 227 V271.5 H528" stroke="#e8e8ea" stroke-width="1" fill="none"/><rect x="487.5" y="267.5" width="7" height="7.5" stroke="#c0c1c6" stroke-width="1.2" fill="none"/><path d="M492.5 212.5 L497.5 218 L502.5 212.5 M497.5 218 V224" stroke="#e0e1e6" stroke-width="1.1" fill="none"/><path d="M513.5 213 V270 M485 241.5 H542" stroke="#ffffff" stroke-width="1" fill="none"/><circle cx="522.5" cy="231" r="3.6" fill="#e8e8ea"/><rect x="520" y="230.4" width="5" height="1.4" fill="#2a2c36"/></svg>
<div class="a" style="left:527.5px;top:408.5px;width:133px;height:19px;background:#a3a4a7;border:1px solid #3a3a3e"></div>
<div class="t" style="left:531.00px;top:412px;font-size:11px;line-height:11px;color:#2a2b30;font-family:'Liberation Sans',sans-serif;transform:scaleX(0.9479);transform-origin:0.00px 0;">Spécifiez le premier point:</div>
<div class="a" style="left:664px;top:409px;width:46.5px;height:18px;background:#9a9b9f;border:1px solid #3a3a3e"></div>
<div class="t" style="left:668.00px;top:412px;font-size:11px;line-height:11px;color:#33343a;font-family:'Liberation Sans',sans-serif;transform:scaleX(0.9239);transform-origin:0.00px 0;">200</div>
<svg class="a" style="left:697px;top:412px;" width="9" height="11" viewBox="0 0 9 11"><path d="M1 10 V4 C1 2.5 2 2 3 3 V1.5 C3 0.5 4.5 0.5 4.5 1.5 V3 C5 2 6.5 2 6.5 3.5 C7 2.8 8.5 3 8.5 4.5 V10Z" fill="#d8a860"/><path d="M3 5 V7 M5 5 V7" stroke="#8a6030" stroke-width="0.8"/></svg>
<div class="a" style="left:714.5px;top:409px;width:37px;height:18px;background:#ffffff;border:1px solid #5a5a60"></div>
<div class="t" style="left:718.00px;top:412px;font-size:11px;line-height:11px;color:#22232a;font-family:'Liberation Sans',sans-serif;transform:scaleX(0.9239);transform-origin:0.00px 0;">200</div>
<div class="a" style="left:593px;top:531px;width:169px;height:13px;background:#55575f;opacity:0.9"></div>
<div class="a" style="left:593px;top:549px;width:298px;height:13px;background:#55575f;opacity:0.9"></div>
<div class="a" style="left:593px;top:566px;width:163px;height:13px;background:#55575f;opacity:0.9"></div>
<div class="t" style="left:596.00px;top:535px;font-size:10px;line-height:10px;color:#b8bac0;font-family:'Liberation Mono',monospace;transform:scaleX(1.0123);transform-origin:0.00px 0;">Spécifiez le premier point:</div>
<div class="t" style="left:596.00px;top:552px;font-size:10px;line-height:10px;color:#d0d1d6;font-family:'Liberation Mono',monospace;transform:scaleX(1.0135);transform-origin:0.00px 0;">&gt;&gt;Entrez une nouvelle valeur pour ORTHOMODE &lt;0&gt;:</div>
<div class="t" style="left:596.00px;top:570px;font-size:10px;line-height:10px;color:#eeeef0;font-family:'Liberation Mono',monospace;transform:scaleX(1.0128);transform-origin:0.00px 0;">Reprend la commande LIGNE.</div>
<div class="a" style="left:223px;top:582px;width:48px;height:23px;background:#2c2f3d;"></div>
<svg class="a" style="left:225px;top:584px;" width="8" height="19" viewBox="0 0 8 19"><g fill="#d8d9de"><rect x="1" y="1" width="2" height="2"/><rect x="4.5" y="1" width="2" height="2"/><rect x="1" y="4.5" width="2" height="2"/><rect x="4.5" y="4.5" width="2" height="2"/><rect x="1" y="8" width="2" height="2"/><rect x="4.5" y="8" width="2" height="2"/><rect x="1" y="11.5" width="2" height="2"/><rect x="4.5" y="11.5" width="2" height="2"/><rect x="1" y="15" width="2" height="2"/><rect x="4.5" y="15" width="2" height="2"/></g></svg>
<svg class="a" style="left:235px;top:588.5px;" width="9" height="8.5" viewBox="0 0 9 8.5"><path d="M0.8 0.8L8.2 7.7M8.2 0.8L0.8 7.7" stroke="#d0d1d6" stroke-width="1.5"/></svg>
<svg class="a" style="left:253px;top:588px;" width="14" height="14" viewBox="0 0 14 14"><path d="M1.8 12.2 L8.5 5.5" stroke="#d8d9de" stroke-width="1.8" stroke-linecap="round"/><path d="M7.2 5.8 A3.8 3.8 0 0 1 10.5 1 L9.5 3.8 L11 5 L13.4 3.2 A3.8 3.8 0 0 1 8.5 7.2Z" fill="#d8d9de"/></svg>
<div class="a" style="left:272px;top:583px;width:624.5px;height:22px;background:#ffffff;border-radius:2px"></div>
<svg class="a" style="left:274px;top:585px;" width="20" height="17" viewBox="0 0 20 17"><path d="M2 15 L14 3" stroke="#c8ccd8" stroke-width="1" stroke-dasharray="1.5 1"/><rect x="1" y="14" width="2" height="2" fill="#5ab0ea"/><rect x="13" y="2" width="2" height="2" fill="#5ab0ea"/></svg>
<svg class="a" style="left:291.5px;top:592.5px;" width="6.5" height="3.5" viewBox="0 0 6.5 3.5"><path d="M0 0H6.5L3.25 3.5Z" fill="#444"/></svg>
<div class="t" style="left:304.00px;top:591px;font-size:10px;line-height:10px;color:#1a1a1a;font-family:'Liberation Mono',monospace;font-weight:bold;transform:scaleX(0.9667);transform-origin:0.00px 0;">LIGNE</div>
<div class="t" style="left:338.50px;top:591px;font-size:10px;line-height:10px;color:#1a1a1a;font-family:'Liberation Mono',monospace;transform:scaleX(1.0123);transform-origin:0.00px 0;">Spécifiez le premier point:</div>
<svg class="a" style="left:886.5px;top:590.5px;" width="7" height="4" viewBox="0 0 7 4"><path d="M0 4H7L3.5 0Z" fill="#505258"/></svg>
<div class="a" style="left:0px;top:606px;width:1120px;height:1px;background:#30344a;"></div>
<div class="a" style="left:0px;top:607px;width:245px;height:14px;background:#242737;"></div>
<svg class="a" style="left:0px;top:606px;" width="260" height="17" viewBox="0 0 260 17"><path d="M6 1 H57 C55 1 54.5 2 54 4 L52 13 C51.5 15 50.5 15.5 48.5 15.5 H14 C12 15.5 11 15 10.5 13 L8.5 4 C8 2 7.5 1 6 1Z" fill="#3c4054"/><path d="M57 1 H139 C137.5 1 137 2 136.5 4 L134.5 13 C134 15 133 15.5 131 15.5 H65 C63 15.5 62 15 61.5 13 L59.5 4 C59 2 58.5 1 57 1Z" fill="#2e3242"/><path d="M139 1 H222 C220.5 1 220 2 219.5 4 L217.5 13 C217 15 216 15.5 214 15.5 H147 C145 15.5 144 15 143.5 13 L141.5 4 C141 2 140.5 1 139 1Z" fill="#2e3242"/><path d="M226 1 H245 C243.5 1 243 2 242.5 4 L241 12 C240.5 14 239.5 15 238 15 H232 C230 15 229.5 14 229 12 L227.5 4 C227 2 226.5 1 226 1Z" fill="#2e3242"/></svg>
<div class="t" style="left:19.00px;top:608px;font-size:11px;line-height:11px;color:#eceef2;font-family:'Liberation Sans',sans-serif;font-weight:bold;transform:scaleX(0.9253);transform-origin:0.00px 0;">Objet</div>
<div class="t" style="left:66.00px;top:608px;font-size:11px;line-height:11px;color:#c3c5cc;font-family:'Liberation Sans',sans-serif;transform:scaleX(0.9131);transform-origin:0.00px 0;">Présentation1</div>
<div class="t" style="left:149.00px;top:608px;font-size:11px;line-height:11px;color:#c3c5cc;font-family:'Liberation Sans',sans-serif;transform:scaleX(0.9131);transform-origin:0.00px 0;">Présentation2</div>
<svg class="a" style="left:231px;top:609px;" width="9" height="9" viewBox="0 0 9 9"><path d="M4.5 0.5V8.5M0.5 4.5H8.5" stroke="#c8c9ce" stroke-width="1.5"/></svg>
<div class="a" style="left:646px;top:607px;width:474px;height:24px;background:#242738;"></div>
<div class="a" style="left:651px;top:608px;width:35px;height:20px;background:#3b3f52;"></div>
<div class="t" style="left:654.00px;top:614px;font-size:11px;line-height:11px;color:#e2e3e8;font-family:'Liberation Sans',sans-serif;transform:scaleX(0.8169);transform-origin:0.00px 0;">OBJET</div>
<div class="a" style="left:689px;top:608px;width:20px;height:20px;background:#6592c6;"></div>
<svg class="a" style="left:690px;top:609px;" width="18" height="18" viewBox="0 0 18 18"><path d="M5.5 3V15 M9 3V15 M12.5 3V15 M3 5.5H15 M3 9H15 M3 12.5H15" stroke="#eef2f8" stroke-width="1.2"/></svg>
<div class="a" style="left:709px;top:608px;width:35px;height:20px;background:#3b3f52;"></div>
<svg class="a" style="left:710px;top:609px;" width="18" height="18" viewBox="0 0 18 18"><g fill="#e0e1e6"><rect x="4" y="4" width="2" height="2"/><rect x="8" y="4" width="2" height="2"/><rect x="12" y="4" width="2" height="2"/><rect x="4" y="8" width="2" height="2"/><rect x="8" y="8" width="2" height="2"/><rect x="12" y="8" width="2" height="2"/><rect x="4" y="12" width="2" height="2"/><rect x="8" y="12" width="2" height="2"/><rect x="12" y="12" width="2" height="2"/></g></svg>
<svg class="a" style="left:734.0px;top:616.0px;" width="7" height="4.0" viewBox="0 0 7 4.0"><path d="M0 0H7 L3.5 4.0 Z" fill="#d8d9de"/></svg>
<div class="a" style="left:747px;top:608px;width:91px;height:20px;background:#3b3f52;"></div>
<svg class="a" style="left:749px;top:609px;" width="18" height="18" viewBox="0 0 18 18"><path d="M2.5 2V16.5H16.5 M2.5 11.5H7.5V16.5" stroke="#e0e1e6" stroke-width="1.2" fill="none"/></svg>
<div class="a" style="left:769px;top:608px;width:19.5px;height:20px;background:#6592c6;"></div>
<svg class="a" style="left:769px;top:609px;" width="20" height="18" viewBox="0 0 20 18"><circle cx="8.5" cy="10" r="6" stroke="#eef2f8" stroke-width="1.2" fill="none"/><path d="M6 13 L14.5 3 V13 H3" stroke="#eef2f8" stroke-width="1.2" fill="none"/></svg>
<svg class="a" style="left:793.5px;top:616.0px;" width="7" height="4.0" viewBox="0 0 7 4.0"><path d="M0 0H7 L3.5 4.0 Z" fill="#d8d9de"/></svg>
<svg class="a" style="left:806px;top:609px;" width="15" height="18" viewBox="0 0 15 18"><path d="M7.5 1V17" stroke="#e0e1e6" stroke-width="1.1"/><path d="M2 3 L13 15" stroke="#c84a3a" stroke-width="1.2"/><circle cx="7.5" cy="9" r="1.8" fill="#262938" stroke="#e0e1e6" stroke-width="1"/></svg>
<svg class="a" style="left:828.3px;top:616.0px;" width="7" height="4.0" viewBox="0 0 7 4.0"><path d="M0 0H7 L3.5 4.0 Z" fill="#d8d9de"/></svg>
<div class="a" style="left:840.5px;top:608px;width:19px;height:20px;background:#6592c6;"></div>
<svg class="a" style="left:840px;top:609px;" width="20" height="18" viewBox="0 0 20 18"><path d="M3 15H17 M3 15 L14 5" stroke="#eef2f8" stroke-width="1.2" fill="none"/><rect x="7.5" y="8.5" width="3" height="3" fill="#eef2f8"/><path d="M5 16.5V15 M9 16.5V15 M13 16.5V15" stroke="#eef2f8" stroke-width="1"/></svg>
<div class="a" style="left:861px;top:608px;width:19px;height:20px;background:#6592c6;"></div>
<svg class="a" style="left:861px;top:609px;" width="19" height="18" viewBox="0 0 19 18"><rect x="4.5" y="4.5" width="12" height="12" stroke="#eef2f8" stroke-width="1.2" fill="none"/><rect x="2" y="2" width="4" height="4" fill="#6592c6" stroke="#eef2f8" stroke-width="1"/></svg>
<div class="a" style="left:880px;top:608px;width:18.5px;height:20px;background:#3b3f52;"></div>
<div class="a" style="left:899px;top:608px;width:19px;height:20px;background:#6592c6;"></div>
<div class="a" style="left:918px;top:608px;width:73px;height:20px;background:#3b3f52;"></div>
<svg class="a" style="left:900px;top:609px;" width="18" height="18" viewBox="0 0 18 18"><path d="M9 2 L11 9 L16 14 L10 12 L9 17 L8 12 L2 14 L7 9Z" fill="#e6e7ea"/></svg>
<svg class="a" style="left:922px;top:609px;" width="14" height="18" viewBox="0 0 14 18"><path d="M7 3 L9 9 L13 12 L8 11 L7 16 L6 11 L1 12 L5 9Z" fill="#c9cad0"/></svg>
<svg class="a" style="left:944px;top:609px;" width="14" height="18" viewBox="0 0 14 18"><path d="M1 4 L5 15 L7 8 L9 15 L13 4" stroke="#c9cad0" stroke-width="1.5" fill="none"/></svg>
<div class="t" style="left:966.00px;top:615px;font-size:10px;line-height:10px;color:#a0a2aa;font-family:'Liberation Sans',sans-serif;transform:scaleX(0.8633);transform-origin:0.00px 0;">1:1</div>
<svg class="a" style="left:995px;top:610px;" width="18" height="16" viewBox="0 0 18 16"><path d="M9 1.5 L10.5 3.5 L13 2.8 L13.5 5.3 L16 6 L15 8.5 L16 11 L13.5 11.7 L13 14.2 L10.5 13.5 L9 15.5 L7.5 13.5 L5 14.2 L4.5 11.7 L2 11 L3 8.5 L2 6 L4.5 5.3 L5 2.8 L7.5 3.5Z" fill="#c9cad0"/><circle cx="9" cy="8.5" r="2.5" fill="#3b3f52"/></svg>
<div class="a" style="left:993px;top:608px;width:36px;height:20px;background:#3b3f52;"></div>
<svg class="a" style="left:995px;top:610px;" width="18" height="16" viewBox="0 0 18 16"><path d="M9 1.5 L10.5 3.5 L13 2.8 L13.5 5.3 L16 6 L15 8.5 L16 11 L13.5 11.7 L13 14.2 L10.5 13.5 L9 15.5 L7.5 13.5 L5 14.2 L4.5 11.7 L2 11 L3 8.5 L2 6 L4.5 5.3 L5 2.8 L7.5 3.5Z" fill="#d0d1d6"/><circle cx="9" cy="8.5" r="2.3" fill="#3b3f52"/></svg>
<svg class="a" style="left:1019.0px;top:616.25px;" width="6" height="3.5" viewBox="0 0 6 3.5"><path d="M0 0H6 L3.0 3.5 Z" fill="#d8d9de"/></svg>
<div class="a" style="left:1030px;top:608px;width:21px;height:20px;background:#3b3f52;"></div>
<svg class="a" style="left:1033px;top:611px;" width="14" height="14" viewBox="0 0 14 14"><path d="M7 0V14M0 7H14" stroke="#eef0f4" stroke-width="1.8"/></svg>
<div class="a" style="left:1053px;top:608px;width:21px;height:20px;background:#3b3f52;"></div>
<svg class="a" style="left:1056px;top:610px;" width="16" height="17" viewBox="0 0 16 17"><rect x="0.75" y="0.75" width="5.5" height="5.5" stroke="#e0e1e6" stroke-width="1.1" fill="none"/><circle cx="12" cy="7" r="3" stroke="#e0e1e6" stroke-width="1.1" fill="none"/><path d="M6 10 L9.5 15.5 H2.5Z" stroke="#e0e1e6" stroke-width="1.1" fill="none"/></svg>
<div class="a" style="left:1077.5px;top:608px;width:19.5px;height:20px;background:#3b3f52;"></div>
<svg class="a" style="left:1079px;top:611px;" width="16" height="13" viewBox="0 0 16 13"><rect x="0.75" y="0.75" width="14.5" height="10.5" stroke="#e0e1e6" stroke-width="1.2" fill="none"/><path d="M4 9 L11.5 3 M4 9 V6.5 M4 9 H6.5 M11.5 3 H9 M11.5 3 V5.5" stroke="#e0e1e6" stroke-width="1.1" fill="none"/></svg>
<div class="a" style="left:1099.5px;top:608px;width:19.5px;height:20px;background:#3b3f52;"></div>
<svg class="a" style="left:1101px;top:611px;" width="15" height="14" viewBox="0 0 15 14"><path d="M0 1.5H15 M0 7H15 M0 12.5H15" stroke="#eef0f4" stroke-width="1.8"/></svg>
<div class="t" style="left:879.00px;top:608px;font-size:21px;line-height:21px;color:rgba(205,205,210,0.6);font-family:'Liberation Sans',sans-serif;transform:scaleX(0.9472);transform-origin:0.00px 0;">Activer Windows</div>
</body></html>
